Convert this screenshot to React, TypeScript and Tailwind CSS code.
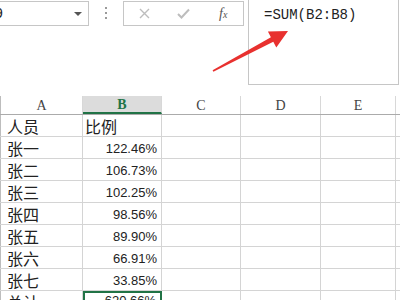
import React from 'react';

const rows: [string, string][] = [
  ['张一', '122.46%'],
  ['张二', '106.73%'],
  ['张三', '102.25%'],
  ['张四', '98.56%'],
  ['张五', '89.90%'],
  ['张六', '66.91%'],
  ['张七', '33.85%'],
];

const cjk = "font-['Noto_Sans_CJK_SC',sans-serif]";
const num = "font-['Liberation_Sans',Arial,sans-serif]";

function HeaderCell({ label, w, active }: { label: string; w: string; active?: boolean }) {
  return (
    <div
      className={`${w} h-full flex items-center justify-center border-r border-[#d8d8d8] text-[14px] font-['Liberation_Serif',serif] ${
        active ? 'bg-[#dcdcdc] text-[#217346] font-bold border-b-2 border-b-[#217346]' : 'text-[#444]'
      }`}
    >
      {label}
    </div>
  );
}

function Row({ a, b, last }: { a: string; b: string; last?: boolean }) {
  return (
    <div className="flex h-[22px] border-b border-[#d4d4d4]">
      <div className="w-[1px] bg-[#bdbdbd]" />
      <div className={`w-[82px] border-r border-[#d4d4d4] flex items-end pl-[6px] text-[16px] leading-[20px] text-[#222] ${cjk}`}>{a}</div>
      <div
        className={`w-[79px] flex items-end justify-end pr-[4px] text-[13px] leading-[19px] text-[#222] ${num} ${
          last ? 'border-2 border-[#217346]' : 'border-r border-[#d4d4d4]'
        }`}
      >
        {b}
      </div>
      <div className="w-[79px] border-r border-[#d4d4d4]" />
      <div className="w-[80px] border-r border-[#d4d4d4]" />
      <div className="w-[75px] border-r border-[#d4d4d4]" />
      <div className="flex-1" />
    </div>
  );
}

export default function App() {
  return (
    <div className="relative w-[400px] h-[300px] overflow-hidden bg-white">
      {/* formula bar */}
      <div className="flex items-start h-[96px]">
        <div className="w-[89px] h-[25px] mt-[1px] border border-l-0 border-[#c6c6c6] flex items-center justify-between pr-[6px]">
          <span className="-ml-[5px] text-[14px] text-[#222] font-['Liberation_Sans',sans-serif]">9</span>
          <span className="w-0 h-0 border-l-[4px] border-r-[4px] border-t-[4px] border-l-transparent border-r-transparent border-t-[#555]" />
        </div>
        <div className="w-[34px] h-[25px] flex flex-col items-center justify-center gap-[3px]">
          <span className="w-[2px] h-[2px] bg-[#9a9a9a]" />
          <span className="w-[2px] h-[2px] bg-[#9a9a9a]" />
          <span className="w-[2px] h-[2px] bg-[#9a9a9a]" />
        </div>
        <div className="w-[121px] h-[25px] mt-[1px] border border-[#c6c6c6] flex items-center">
          <svg className="ml-[15px]" width="11" height="11" viewBox="0 0 11 11">
            <path d="M1 1 L10 10 M10 1 L1 10" stroke="#bdbdbd" strokeWidth="1.4" />
          </svg>
          <svg className="ml-[27px]" width="13" height="11" viewBox="0 0 13 11">
            <path d="M1 6 L4.5 9.5 L12 1.5" stroke="#bdbdbd" strokeWidth="2" fill="none" />
          </svg>
          <span className="ml-[29px] text-[14px] italic text-[#555] font-['Liberation_Serif',serif]">
            f<span className="text-[10px]">x</span>
          </span>
        </div>
        <div className="ml-[4px] w-[151px] h-[85px] border border-t-0 border-[#c6c6c6] pl-[15px] pt-[6px] text-[14px] leading-[18px] text-[#222] font-['Liberation_Mono',monospace]">
          =SUM(B2:B8)
        </div>
      </div>

      {/* column headers */}
      <div className="flex h-[19px] border-b border-[#ababab]">
        <div className="w-[1px] bg-[#bdbdbd]" />
        <HeaderCell label="A" w="w-[82px]" />
        <HeaderCell label="B" w="w-[79px]" active />
        <HeaderCell label="C" w="w-[79px]" />
        <HeaderCell label="D" w="w-[80px]" />
        <HeaderCell label="E" w="w-[75px]" />
        <div className="flex-1" />
      </div>

      <div className="flex h-[22px] border-b border-[#d4d4d4]">
        <div className="w-[1px] bg-[#bdbdbd]" />
        <div className={`w-[82px] border-r border-[#d4d4d4] flex items-end pl-[6px] text-[16px] leading-[20px] text-[#222] ${cjk}`}>人员</div>
        <div className={`w-[79px] border-r border-[#d4d4d4] flex items-end pl-[2px] text-[16px] leading-[20px] text-[#222] ${cjk}`}>比例</div>
        <div className="w-[79px] border-r border-[#d4d4d4]" />
        <div className="w-[80px] border-r border-[#d4d4d4]" />
        <div className="w-[75px] border-r border-[#d4d4d4]" />
        <div className="flex-1" />
      </div>
      {rows.map(([a, b]) => (
        <Row key={a} a={a} b={b} />
      ))}
      <Row a="总计" b="620.66%" last />

      {/* red arrow */}
      <svg className="absolute left-0 top-0 pointer-events-none" width="400" height="300">
        <polygon
          points="212.6,70.3 270.9,37.3 267.9,31.6 288,31 276.3,47.4 273.3,41.7 213.4,71.7"
          fill="#e8312f"
        />
      </svg>
    </div>
  );
}
